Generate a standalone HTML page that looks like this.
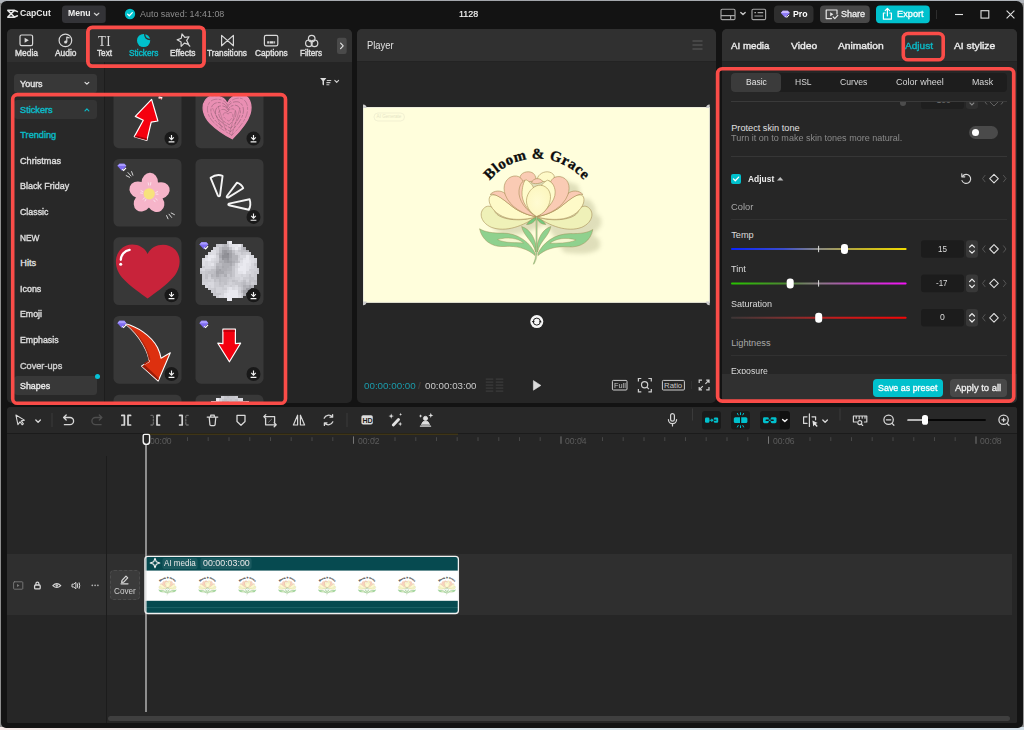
<!DOCTYPE html>
<html lang="en"><head><meta charset="utf-8"><title>CapCut</title>
<style>
*{box-sizing:border-box;margin:0;padding:0}
html,body{width:1024px;height:730px;overflow:hidden}
body{font-family:"Liberation Sans",sans-serif;background:#8e8e8e;position:relative}
.a{position:absolute}
.t{position:absolute;white-space:nowrap;line-height:1;transform-origin:0 0;display:block}
svg{position:absolute;overflow:visible}
#win{left:1.100px;top:1.200px;width:1021.500px;height:726.600px;background:#131313;border-radius:5.500px 6.500px 5px 5px}
.panel{background:#262626;border-radius:5px;overflow:hidden}
.hdr{background:#303030;left:0;top:0;right:0}
.red{border:3.800px solid #fa4c48;border-radius:6.500px;pointer-events:none}
.ic{stroke:#d8d8d8;fill:none;stroke-width:1.2;stroke-linecap:round;stroke-linejoin:round}
.tile{background:#383838;border-radius:5px;width:68px;height:68px;overflow:hidden}
.dl{width:14px;height:14px;border-radius:7px;background:#191919}
.sep{height:1px;background:#363636}
</style></head><body>
<div class="a" style="left:0;top:0;width:1024px;height:3px;background:linear-gradient(90deg,#b2b6bc,#a2a5aa 50%,#b0b4ba)"></div>
<div class="a" style="left:0;top:726.500px;width:1024px;height:3.500px;background:linear-gradient(90deg,#f4e8e6,#e6e4e6 25%,#d8e4ea 50%,#d4e0e8 100%)"></div>
<div class="a" style="left:1020px;top:3px;width:4px;height:723.500px;background:linear-gradient(90deg,#8a8a8a 60%,#a2a2a2)"></div>
<div id="win" class="a"></div>
<!-- ===== TITLE BAR ===== -->
<svg class="a" style="left:0;top:0" width="1024" height="30" viewBox="0 0 1024 30">
 <!-- capcut logo -->
 <g stroke="#e6e6e6" stroke-width="1.5" fill="none" stroke-linejoin="round" stroke-linecap="round">
  <path d="M7.8 10.2H14.2L17.4 11.6M7.8 17.2H14.2L17.4 15.8M7.8 10.4L14.4 17M7.8 17L14.4 10.4"/>
 </g>
 <!-- menu btn -->
 <rect x="62" y="5.500" width="43.800" height="17.400" rx="3.500" fill="#333337"/>
 <path d="M94.400 13.300l2.200 2.100 2.200-2.100" stroke="#cfcfcf" stroke-width="1.250" fill="none" stroke-linecap="round" stroke-linejoin="round"/>
 <!-- autosave check -->
 <circle cx="130" cy="14" r="5.2" fill="#00c1cd"/>
 <path d="M127.6 14.1l1.7 1.7 3-3.2" stroke="#fff" stroke-width="1.3" fill="none" stroke-linecap="round" stroke-linejoin="round"/>
 <!-- layout icon -->
 <g stroke="#a4a4a4" stroke-width="1.150" fill="none">
  <rect x="721" y="9.2" width="14" height="10.4" rx="1.2"/>
  <path d="M721 15.6H735M730.6 15.6V19.6"/>
  <path d="M740.800 12.400l2.200 2.200 2.200-2.200" stroke="#c4c4c4" stroke-width="1.400" stroke-linecap="round" stroke-linejoin="round"/>
  <rect x="752" y="9.2" width="13.6" height="10.4" rx="1.2"/>
  <path d="M754.4 12.6h1.6M757.6 12.6h5.6M754.4 16h8.8"/>
 </g>
 <!-- pro -->
 <rect x="774" y="5.6" width="39.5" height="17.4" rx="4" fill="#2e2e2e"/>
 <g transform="translate(-.8 .9)"><path d="M781.6 12l2-2.2h5l2 2.2-4.5 4.8z" fill="#8f7cf8"/>
 <path d="M781.6 12l2-2.2h5l2 2.2z" fill="#c9b8ff"/>
 <path d="M786.3 15.2l1.300 1.300 2.400-2.600" stroke="#fff" stroke-width="1" fill="none"/></g>
 <!-- share -->
 <rect x="820" y="5.6" width="49.8" height="17.4" rx="4" fill="#484848"/>
 <g stroke="#e8e8e8" stroke-width="1.2" fill="none" stroke-linejoin="round" stroke-linecap="round">
  <path d="M831.5 18.6H826.2V10H837V14"/>
  <path d="M833.2 17l1.6 1.6 3-3.2"/>
 </g>
 <path d="M830.2 12.2v4l3.2-2z" fill="#e8e8e8"/>
 <!-- export -->
 <rect x="876" y="5.6" width="53.8" height="17.6" rx="4" fill="#00c1cd"/>
 <g stroke="#fff" stroke-width="1.2" fill="none" stroke-linejoin="round" stroke-linecap="round">
  <path d="M885 13H883.4V19.2H891.4V13H889.8"/>
  <path d="M887.4 16V8.6M885.2 10.6l2.2-2.2 2.2 2.2"/>
 </g>
 <path d="M936.500 10V19" stroke="#2e2e2e" stroke-width="1"/>
 <!-- window controls -->
 <g stroke="#e0e0e0" stroke-width="1.1" fill="none">
  <path d="M955 14.5H963"/>
  <rect x="981" y="10.7" width="7.8" height="7.4"/>
  <path d="M1006.6 10.6l7.8 7.8M1014.4 10.6l-7.8 7.8"/>
 </g>
</svg>
<span class="t" style="left:20.30px;top:8.04px;font-size:9.4px;color:#e8e8e8;font-weight:700;transform:scaleX(0.924);">CapCut</span>
<span class="t" style="left:68.20px;top:8.47px;font-size:9.6px;color:#f0f0f0;font-weight:700;transform:scaleX(0.905);">Menu</span>
<span class="t" style="left:139.80px;top:9.07px;font-size:9.6px;color:#8e8e8e;transform:scaleX(0.930);">Auto saved: 14:41:08</span>
<span class="t" style="left:459.20px;top:9.27px;font-size:9.6px;color:#f2f2f2;-webkit-text-stroke:0.2px;transform:scaleX(0.931);">1128</span>
<span class="t" style="left:792.80px;top:9.17px;font-size:9.6px;color:#fff;font-weight:700;transform:scaleX(0.911);">Pro</span>
<span class="t" style="left:841.00px;top:8.97px;font-size:9.6px;color:#f0f0f0;-webkit-text-stroke:0.3px;transform:scaleX(0.942);">Share</span>
<span class="t" style="left:897.20px;top:8.97px;font-size:9.6px;color:#fff;-webkit-text-stroke:0.3px;transform:scaleX(0.962);">Export</span>
<!-- ===== LEFT PANEL ===== -->
<div class="a panel" style="left:7px;top:29px;width:344.7px;height:374px;background:#252525">
 <div class="a hdr" style="height:33px"></div>
 <div class="a" style="left:0;top:33px;width:96.5px;bottom:0;background:#282828"></div>
 <div class="a" style="left:96.5px;top:33px;width:1px;bottom:0;background:#1d1d1d"></div>
 <!-- yours / stickers / shapes boxes -->
 <div class="a" style="left:6.5px;top:45.4px;width:83.5px;height:18.2px;border-radius:3.5px;background:#383838"></div>
 <div class="a" style="left:6.5px;top:71px;width:83.5px;height:18.8px;border-radius:3.5px;background:#343434"></div>
 <div class="a" style="left:6.5px;top:347.2px;width:83.5px;height:19px;border-radius:3.5px;background:#383838"></div>
 <div class="a" style="left:87.5px;top:345px;width:5px;height:5px;border-radius:3px;background:#06c2d6"></div>
</div>
<!-- tab icons -->
<svg class="a" style="left:0;top:0" width="360" height="100" viewBox="0 0 360 100">
 <g class="ic">
  <rect x="20" y="35" width="12.6" height="10.6" rx="1.6"/>
  <circle cx="65.4" cy="40.4" r="6.3"/>
  <path d="M66.8 41.8V37.2l2.4.7"/>
  <path d="M221.6 35.4V45.8L233.4 35.4V45.8Z"/>
  <rect x="264.4" y="35.3" width="13.4" height="10.6" rx="1.6"/>
  <path d="M267.200 42.400h7.900" stroke-width="2.300" stroke-linecap="butt"/><path d="M269.400 41v3M273.800 41v3" stroke="#303030" stroke-width=".6"/>
  <circle cx="311.700" cy="38.600" r="3.300"/><circle cx="308.900" cy="43.300" r="3.300"/><circle cx="314.500" cy="43.300" r="3.300"/>
  <path transform="rotate(-14 183.500 40.500)" d="M183.600 33.800l1.900 4 4.300.4-3.200 3 .9 4.300-3.800-2.200-3.900 2.300 1-4.300-3.300-3 4.400-.5z"/>
  <path d="M188.4 44.6l1.4 1.6"/>
 </g>
 <path d="M24.6 37.8v5l4.2-2.5z" fill="#d8d8d8"/>
 <circle cx="65.6" cy="42" r="1.5" fill="#d8d8d8"/>
 <!-- stickers icon (active) -->
 <circle cx="143.6" cy="40.5" r="6.6" fill="#00c1cd"/>
 <path d="M144.700 33.600c-.3 3.600 1.900 6 5.700 5.900" stroke="#303030" stroke-width="1.300" fill="none"/>
 
 <!-- > button -->
 <rect x="337" y="37.8" width="9.7" height="16.2" rx="2.2" fill="#4a4a4a"/>
 <path d="M340.6 43.2l2.6 2.700-2.600 2.700" stroke="#e0e0e0" stroke-width="1.200" fill="none" stroke-linecap="round" stroke-linejoin="round"/>
 <!-- filter icon -->
 <path d="M320.100 77.900h6.300l-2.400 3v4.500l-1.500-.8v-3.700z" fill="#dcdcdc"/>
 <path d="M326.800 80.500h4.400M326.400 82.600h4M326.400 84.700h2.900" stroke="#c8c8c8" stroke-width="1.100"/>
 <path d="M334.800 80.400l1.900 1.900 1.900-1.900" stroke="#d0d0d0" stroke-width="1.100" fill="none" stroke-linecap="round" stroke-linejoin="round"/>
 <!-- sidebar chevrons -->
 <path d="M85 82.300l1.900 1.900 1.900-1.900" stroke="#e0e0e0" stroke-width="1.200" fill="none" stroke-linecap="round" stroke-linejoin="round"/>
 <path d="M85 110.800l1.900-1.900 1.900 1.900" stroke="#0bb9c6" stroke-width="1.200" fill="none" stroke-linecap="round" stroke-linejoin="round"/>
</svg>
<span class="t" style="left:98.200px;top:33.200px;font-family:'Liberation Serif',serif;font-size:15.500px;color:#dcdcdc;letter-spacing:.3px;transform:scaleX(.84)">TI</span>
<span class="t" style="left:15.00px;top:49.37px;font-size:8.9px;color:#dedede;-webkit-text-stroke:0.45px;transform:scaleX(0.949);">Media</span>
<span class="t" style="left:54.50px;top:49.37px;font-size:8.9px;color:#dedede;-webkit-text-stroke:0.45px;transform:scaleX(0.945);">Audio</span>
<span class="t" style="left:97.00px;top:49.37px;font-size:8.9px;color:#dedede;-webkit-text-stroke:0.45px;transform:scaleX(0.922);">Text</span>
<span class="t" style="left:128.80px;top:49.37px;font-size:8.9px;color:#0bb9c6;-webkit-text-stroke:0.45px;transform:scaleX(0.934);">Stickers</span>
<span class="t" style="left:170.00px;top:49.37px;font-size:8.9px;color:#dedede;-webkit-text-stroke:0.45px;transform:scaleX(0.944);">Effects</span>
<span class="t" style="left:207.00px;top:49.37px;font-size:8.9px;color:#dedede;-webkit-text-stroke:0.45px;transform:scaleX(0.928);">Transitions</span>
<span class="t" style="left:254.80px;top:49.37px;font-size:8.9px;color:#dedede;-webkit-text-stroke:0.45px;transform:scaleX(0.933);">Captions</span>
<span class="t" style="left:300.00px;top:49.37px;font-size:8.9px;color:#dedede;-webkit-text-stroke:0.45px;transform:scaleX(0.910);">Filters</span>
<span class="t" style="left:20.00px;top:79.91px;font-size:9.2px;color:#e2e2e2;-webkit-text-stroke:0.4px;transform:scaleX(0.976);">Yours</span>
<span class="t" style="left:20.00px;top:105.51px;font-size:9.2px;color:#0bb9c6;-webkit-text-stroke:0.42px;">Stickers</span>
<span class="t" style="left:20.30px;top:131.01px;font-size:9.2px;color:#0bb9c6;-webkit-text-stroke:0.4px;">Trending</span>
<span class="t" style="left:20.30px;top:156.71px;font-size:9.2px;color:#dedede;-webkit-text-stroke:0.4px;transform:scaleX(0.992);">Christmas</span>
<span class="t" style="left:20.30px;top:182.31px;font-size:9.2px;color:#dedede;-webkit-text-stroke:0.4px;transform:scaleX(0.972);">Black Friday</span>
<span class="t" style="left:20.30px;top:207.91px;font-size:9.2px;color:#dedede;-webkit-text-stroke:0.4px;transform:scaleX(0.960);">Classic</span>
<span class="t" style="left:20.30px;top:233.51px;font-size:9.2px;color:#dedede;-webkit-text-stroke:0.4px;transform:scaleX(0.905);">NEW</span>
<span class="t" style="left:20.30px;top:259.11px;font-size:9.2px;color:#dedede;-webkit-text-stroke:0.4px;">Hits</span>
<span class="t" style="left:20.30px;top:284.71px;font-size:9.2px;color:#dedede;-webkit-text-stroke:0.4px;transform:scaleX(0.970);">Icons</span>
<span class="t" style="left:20.30px;top:310.41px;font-size:9.2px;color:#dedede;-webkit-text-stroke:0.4px;transform:scaleX(0.955);">Emoji</span>
<span class="t" style="left:20.30px;top:336.01px;font-size:9.2px;color:#dedede;-webkit-text-stroke:0.4px;transform:scaleX(0.955);">Emphasis</span>
<span class="t" style="left:20.30px;top:361.51px;font-size:9.2px;color:#cfcfcf;-webkit-text-stroke:0.4px;transform:scaleX(0.996);">Cover-ups</span>
<span class="t" style="left:20.30px;top:381.81px;font-size:9.2px;color:#e8e8e8;-webkit-text-stroke:0.4px;transform:scaleX(0.966);">Shapes</span>
<!-- ===== STICKER TILES ===== -->
<svg class="a" style="left:104px;top:94px;overflow:hidden" width="248" height="309" viewBox="104 94 248 309">
<defs><clipPath id="mc"><circle cx="229.4" cy="271.3" r="28.6"/></clipPath><clipPath id="mc2"><circle cx="229.4" cy="425.400" r="29.600"/></clipPath>
<g id="dl"><circle r="7" fill="#191919"/><path d="M0-3.400V.9M-2.300-1.100L0 1.200 2.300-1.100M-2.900 3.300H2.900" stroke="#f2f2f2" stroke-width="1.150" fill="none"/></g>
<g id="gem" transform="scale(1.25)"><path d="M-3.600-.8l1.600-1.900h4l1.600 1.900-3.600 3.800z" fill="#7f6cf2"/><path d="M-3.600-.8l1.600-1.900h4l1.600 1.900z" fill="#a99cff"/><path d="M.3 1.700l1.100 1 1.900-2.100" stroke="#fff" stroke-width=".9" fill="none"/></g></defs>
<rect x="113.5" y="80.5" width="68" height="67.700" rx="5.500" fill="#383838"/>
<rect x="195.5" y="80.5" width="68" height="67.700" rx="5.500" fill="#383838"/>
<rect x="113.5" y="158.9" width="68" height="67.700" rx="5.500" fill="#383838"/>
<rect x="195.5" y="158.9" width="68" height="67.700" rx="5.500" fill="#383838"/>
<rect x="113.5" y="237.3" width="68" height="67.700" rx="5.500" fill="#383838"/>
<rect x="195.5" y="237.3" width="68" height="67.700" rx="5.500" fill="#383838"/>
<rect x="113.5" y="316.0" width="68" height="67.700" rx="5.500" fill="#383838"/>
<rect x="195.5" y="316.0" width="68" height="67.700" rx="5.500" fill="#383838"/>
<rect x="113.5" y="394.8" width="68" height="67.700" rx="5.500" fill="#383838"/>
<rect x="195.5" y="394.8" width="68" height="67.700" rx="5.500" fill="#383838"/>
<path d="M151.600 99.400L157.900 121 151.200 122.200 146.900 140.400 134.300 136.600 143.300 120.200 135.300 116.400Z" fill="#f5000f" stroke="#fff" stroke-width="1.200" stroke-linejoin="round"/>
<path d="M134.600 136.900L146.700 140.200 147.100 138.600 135.300 135.400Z" fill="#a0000a"/>
<path d="M158.600 97.200l3.600 1.200" stroke="#fff" stroke-width="2.200"/><path d="M159.300 98l2.300.8" stroke="#f33" stroke-width=".8"/>
<path d="M227.300 103.500C224 95.500 211 93 205.500 100 200.500 107 204 117 210 123 217 130 226 135.500 232.300 138.800 238 133 247 124 250 114 253 104 249 95.500 242 94.800 235 94.200 229.500 98 227.300 103.500Z" fill="#e98fb3" stroke="#e98fb3" stroke-width="1.200" stroke-linejoin="round"/>
<path d="M227.300 103.500C224 95.500 211 93 205.500 100 200.500 107 204 117 210 123 217 130 226 135.500 232.300 138.800 238 133 247 124 250 114 253 104 249 95.500 242 94.800 235 94.200 229.500 98 227.300 103.500Z" transform="translate(228.3 115.2) scale(0.84) translate(-228 -115)" fill="none" stroke="#4a3a42" stroke-opacity="0.33" stroke-width="0.95" stroke-dasharray="8.3 1.8 3.6 1.2"/>
<path d="M227.300 103.500C224 95.500 211 93 205.500 100 200.500 107 204 117 210 123 217 130 226 135.500 232.300 138.800 238 133 247 124 250 114 253 104 249 95.500 242 94.800 235 94.200 229.500 98 227.300 103.500Z" transform="translate(227.8 115.5) scale(0.68) translate(-228 -115)" fill="none" stroke="#4a3a42" stroke-opacity="0.4" stroke-width="1.18" stroke-dasharray="10.3 2.2 4.4 1.5"/>
<path d="M227.300 103.500C224 95.500 211 93 205.500 100 200.500 107 204 117 210 123 217 130 226 135.500 232.300 138.800 238 133 247 124 250 114 253 104 249 95.500 242 94.800 235 94.200 229.500 98 227.300 103.500Z" transform="translate(228.4 115.8) scale(0.52) translate(-228 -115)" fill="none" stroke="#4a3a42" stroke-opacity="0.42" stroke-width="1.54" stroke-dasharray="13.5 2.9 5.8 1.9"/>
<path d="M227.300 103.500C224 95.500 211 93 205.500 100 200.500 107 204 117 210 123 217 130 226 135.500 232.300 138.800 238 133 247 124 250 114 253 104 249 95.500 242 94.800 235 94.200 229.500 98 227.300 103.500Z" transform="translate(227.7 116.2) scale(0.36) translate(-228 -115)" fill="none" stroke="#4a3a42" stroke-opacity="0.38" stroke-width="2.22" stroke-dasharray="19.4 4.2 8.3 2.8"/>
<path d="M227.300 103.500C224 95.500 211 93 205.500 100 200.500 107 204 117 210 123 217 130 226 135.500 232.300 138.800 238 133 247 124 250 114 253 104 249 95.500 242 94.800 235 94.200 229.500 98 227.300 103.500Z" transform="translate(228.2 116.5) scale(0.2) translate(-228 -115)" fill="none" stroke="#4a3a42" stroke-opacity="0.3" stroke-width="4.00" stroke-dasharray="35.0 7.5 15.0 5.0"/>
<path d="M231.600 136L240 108M229.500 134L235.500 110M226 131L218 106M222 128L212.500 108" stroke="#4a3a42" stroke-opacity=".28" stroke-width=".8" fill="none"/>
<ellipse cx="149.8" cy="182.4" rx="8.200" ry="9.600" transform="rotate(2 149.8 182.4)" fill="#f6b4c9"/>
<ellipse cx="160.2" cy="190.5" rx="8.200" ry="9.600" transform="rotate(74 160.2 190.5)" fill="#f6b4c9"/>
<ellipse cx="155.7" cy="202.9" rx="8.200" ry="9.600" transform="rotate(146 155.7 202.9)" fill="#f6b4c9"/>
<ellipse cx="142.5" cy="202.4" rx="8.200" ry="9.600" transform="rotate(218 142.5 202.4)" fill="#f6b4c9"/>
<ellipse cx="138.9" cy="189.8" rx="8.200" ry="9.600" transform="rotate(290 138.9 189.8)" fill="#f6b4c9"/>
<circle cx="149.4" cy="193.6" r="8" fill="#f6b4c9"/><circle cx="149.20000000000002" cy="193.79999999999998" r="5.600" fill="#f7e27c"/>
<path d="M126.200 175.600l3.400 1.700M128 172.600l3 3.400M131.600 171.600l1.300 3.600M166.600 215.600l1.400 3.200M169 214.200l2.600 3.200M171.200 213l3.200 1.600" stroke="#e8e8e8" stroke-width=".9" stroke-linecap="round"/>
<path d="M148.200 182.800l.5 2.300M150.800 182.600l-.3 2.400M141 190.600l1.900 1M140.600 193l2 .2M157.600 191.600l-1.900.9M158 194.200l-2-.1M143.200 199.200l1.500-1.500M145 201l1-1.800M153.800 200.200l1.300 1.600M155.800 198.600l1.500 1.300" stroke="#fff" stroke-width=".7" stroke-linecap="round" opacity=".85"/>
<g fill="none" stroke="#f4f4f4" stroke-width="1.900" stroke-linejoin="round"><path d="M210.600 177.800Q216.500 173.600 222.600 175.800L220 195.600Q219 197 217.900 195.600Z"/><path d="M237 182.600Q241.500 184 243.200 188.200L228 197.600Q226.400 197.800 226.800 196.200Z"/><path d="M249.600 199.200Q251.400 204.800 248.800 209.800L229 205.200Q227.600 204.400 229 203.600Z"/></g>
<path d="M147.600 254C143 243.500 128 241.500 120.500 249.500 113 258 115.500 270 122 277.500 130 286.500 142 294 147.600 298.600 153.500 294 166 286 173.500 277 180 269.500 182.500 257.500 175 249.500 167.500 242 152.500 243.500 147.600 254Z" fill="#c8233a"/>
<path d="M120.800 259.800C121 254.800 124.600 250.600 129.600 249.800" stroke="#fff" stroke-width="2.300" fill="none" stroke-linecap="round"/><circle cx="120.700" cy="264.200" r="1.500" fill="#fff"/>
<g shape-rendering="crispEdges"><path fill="#8a8a90" d="M226.8 252.2h3.0v3.0h-3.0z"/><path fill="#909096" d="M221.3 254.9h3.0v3.0h-3.0zM224.0 252.2h3.0v3.0h-3.0zM224.0 254.9h3.0v3.0h-3.0zM226.8 254.9h3.0v3.0h-3.0z"/><path fill="#96969c" d="M221.3 257.6h3.0v3.0h-3.0zM224.0 249.5h3.0v3.0h-3.0zM226.8 257.6h3.0v3.0h-3.0z"/><path fill="#9c9ca2" d="M221.3 249.5h3.0v3.0h-3.0zM221.3 252.2h3.0v3.0h-3.0zM224.0 257.6h3.0v3.0h-3.0zM226.8 260.3h3.0v3.0h-3.0zM245.6 287.3h3.0v3.0h-3.0zM248.3 287.3h3.0v3.0h-3.0z"/><path fill="#a2a2a8" d="M215.9 271.1h3.0v3.0h-3.0zM218.6 268.4h3.0v3.0h-3.0zM224.0 260.3h3.0v3.0h-3.0zM226.8 249.5h3.0v3.0h-3.0zM229.4 252.2h3.0v3.0h-3.0zM229.4 254.9h3.0v3.0h-3.0zM229.4 260.3h3.0v3.0h-3.0zM242.9 290.0h3.0v3.0h-3.0zM245.6 290.0h3.0v3.0h-3.0z"/><path fill="#a8a8ae" d="M215.9 268.4h3.0v3.0h-3.0zM215.9 273.8h3.0v3.0h-3.0zM218.6 254.9h3.0v3.0h-3.0zM218.6 271.1h3.0v3.0h-3.0zM221.3 265.8h3.0v3.0h-3.0zM221.3 271.1h3.0v3.0h-3.0zM229.4 249.5h3.0v3.0h-3.0zM229.4 257.6h3.0v3.0h-3.0zM229.4 263.0h3.0v3.0h-3.0zM242.9 292.8h3.0v3.0h-3.0zM248.3 284.6h3.0v3.0h-3.0z"/><path fill="#aeaeb4" d="M215.9 265.8h3.0v3.0h-3.0zM218.6 252.2h3.0v3.0h-3.0zM218.6 260.3h3.0v3.0h-3.0zM221.3 246.8h3.0v3.0h-3.0zM221.3 260.3h3.0v3.0h-3.0zM221.3 263.0h3.0v3.0h-3.0zM221.3 268.4h3.0v3.0h-3.0zM224.0 246.8h3.0v3.0h-3.0zM224.0 263.0h3.0v3.0h-3.0zM224.0 265.8h3.0v3.0h-3.0zM224.0 268.4h3.0v3.0h-3.0zM224.0 273.8h3.0v3.0h-3.0zM226.8 246.8h3.0v3.0h-3.0zM226.8 263.0h3.0v3.0h-3.0zM226.8 265.8h3.0v3.0h-3.0zM232.1 260.3h3.0v3.0h-3.0zM242.9 246.8h3.0v3.0h-3.0zM242.9 284.6h3.0v3.0h-3.0zM245.6 249.5h3.0v3.0h-3.0z"/><path fill="#b4b4ba" d="M210.5 273.8h3.0v3.0h-3.0zM218.6 257.6h3.0v3.0h-3.0zM218.6 265.8h3.0v3.0h-3.0zM218.6 273.8h3.0v3.0h-3.0zM224.0 244.1h3.0v3.0h-3.0zM224.0 271.1h3.0v3.0h-3.0zM226.8 268.4h3.0v3.0h-3.0zM229.4 265.8h3.0v3.0h-3.0zM229.4 268.4h3.0v3.0h-3.0zM232.1 252.2h3.0v3.0h-3.0zM232.1 254.9h3.0v3.0h-3.0zM232.1 257.6h3.0v3.0h-3.0zM234.8 254.9h3.0v3.0h-3.0zM234.8 257.6h3.0v3.0h-3.0zM242.9 287.3h3.0v3.0h-3.0zM245.6 284.6h3.0v3.0h-3.0zM251.0 284.6h3.0v3.0h-3.0z"/><path fill="#babac0" d="M213.2 271.1h3.0v3.0h-3.0zM213.2 273.8h3.0v3.0h-3.0zM215.9 263.0h3.0v3.0h-3.0zM215.9 276.5h3.0v3.0h-3.0zM218.6 249.5h3.0v3.0h-3.0zM218.6 263.0h3.0v3.0h-3.0zM218.6 276.5h3.0v3.0h-3.0zM218.6 279.2h3.0v3.0h-3.0zM221.3 273.8h3.0v3.0h-3.0zM226.8 271.1h3.0v3.0h-3.0zM229.4 271.1h3.0v3.0h-3.0zM229.4 273.8h3.0v3.0h-3.0zM232.1 263.0h3.0v3.0h-3.0zM234.8 260.3h3.0v3.0h-3.0zM240.2 290.0h3.0v3.0h-3.0zM242.9 281.9h3.0v3.0h-3.0z"/><path fill="#c0c0c6" d="M205.1 273.8h3.0v3.0h-3.0zM205.1 276.5h3.0v3.0h-3.0zM207.8 271.1h3.0v3.0h-3.0zM210.5 268.4h3.0v3.0h-3.0zM210.5 271.1h3.0v3.0h-3.0zM210.5 276.5h3.0v3.0h-3.0zM213.2 268.4h3.0v3.0h-3.0zM213.2 276.5h3.0v3.0h-3.0zM213.2 279.2h3.0v3.0h-3.0zM218.6 246.8h3.0v3.0h-3.0zM218.6 281.9h3.0v3.0h-3.0zM221.3 244.1h3.0v3.0h-3.0zM221.3 276.5h3.0v3.0h-3.0zM221.3 279.2h3.0v3.0h-3.0zM224.0 276.5h3.0v3.0h-3.0zM224.0 279.2h3.0v3.0h-3.0zM224.0 281.9h3.0v3.0h-3.0zM226.8 276.5h3.0v3.0h-3.0zM232.1 249.5h3.0v3.0h-3.0zM232.1 279.2h3.0v3.0h-3.0zM240.2 246.8h3.0v3.0h-3.0zM240.2 249.5h3.0v3.0h-3.0zM240.2 281.9h3.0v3.0h-3.0zM240.2 284.6h3.0v3.0h-3.0zM242.9 249.5h3.0v3.0h-3.0zM242.9 279.2h3.0v3.0h-3.0zM248.3 279.2h3.0v3.0h-3.0zM248.3 281.9h3.0v3.0h-3.0zM253.8 279.2h3.0v3.0h-3.0z"/><path fill="#c6c6cc" d="M199.7 271.1h3.0v3.0h-3.0zM205.1 271.1h3.0v3.0h-3.0zM213.2 287.3h3.0v3.0h-3.0zM213.2 290.0h3.0v3.0h-3.0zM213.2 292.8h3.0v3.0h-3.0zM215.9 244.1h3.0v3.0h-3.0zM215.9 252.2h3.0v3.0h-3.0zM215.9 279.2h3.0v3.0h-3.0zM215.9 292.8h3.0v3.0h-3.0zM218.6 284.6h3.0v3.0h-3.0zM218.6 292.8h3.0v3.0h-3.0zM221.3 281.9h3.0v3.0h-3.0zM221.3 284.6h3.0v3.0h-3.0zM226.8 244.1h3.0v3.0h-3.0zM226.8 273.8h3.0v3.0h-3.0zM226.8 279.2h3.0v3.0h-3.0zM229.4 246.8h3.0v3.0h-3.0zM229.4 276.5h3.0v3.0h-3.0zM232.1 265.8h3.0v3.0h-3.0zM232.1 268.4h3.0v3.0h-3.0zM232.1 271.1h3.0v3.0h-3.0zM232.1 273.8h3.0v3.0h-3.0zM234.8 279.2h3.0v3.0h-3.0zM234.8 281.9h3.0v3.0h-3.0zM237.5 249.5h3.0v3.0h-3.0zM237.5 260.3h3.0v3.0h-3.0zM237.5 281.9h3.0v3.0h-3.0zM237.5 284.6h3.0v3.0h-3.0zM240.2 244.1h3.0v3.0h-3.0zM240.2 252.2h3.0v3.0h-3.0zM240.2 287.3h3.0v3.0h-3.0zM245.6 281.9h3.0v3.0h-3.0zM248.3 273.8h3.0v3.0h-3.0zM248.3 276.5h3.0v3.0h-3.0zM251.0 276.5h3.0v3.0h-3.0zM251.0 279.2h3.0v3.0h-3.0zM253.8 263.0h3.0v3.0h-3.0zM253.8 281.9h3.0v3.0h-3.0zM256.4 268.4h3.0v3.0h-3.0z"/><path fill="#ccccd2" d="M202.4 265.8h3.0v3.0h-3.0zM202.4 271.1h3.0v3.0h-3.0zM202.4 273.8h3.0v3.0h-3.0zM202.4 276.5h3.0v3.0h-3.0zM202.4 279.2h3.0v3.0h-3.0zM205.1 268.4h3.0v3.0h-3.0zM205.1 279.2h3.0v3.0h-3.0zM207.8 268.4h3.0v3.0h-3.0zM207.8 273.8h3.0v3.0h-3.0zM207.8 279.2h3.0v3.0h-3.0zM207.8 287.3h3.0v3.0h-3.0zM210.5 287.3h3.0v3.0h-3.0zM210.5 290.0h3.0v3.0h-3.0zM213.2 265.8h3.0v3.0h-3.0zM213.2 281.9h3.0v3.0h-3.0zM213.2 284.6h3.0v3.0h-3.0zM215.9 260.3h3.0v3.0h-3.0zM215.9 281.9h3.0v3.0h-3.0zM215.9 284.6h3.0v3.0h-3.0zM215.9 295.4h3.0v3.0h-3.0zM218.6 244.1h3.0v3.0h-3.0zM221.3 287.3h3.0v3.0h-3.0zM224.0 287.3h3.0v3.0h-3.0zM226.8 281.9h3.0v3.0h-3.0zM229.4 279.2h3.0v3.0h-3.0zM229.4 284.6h3.0v3.0h-3.0zM232.1 276.5h3.0v3.0h-3.0zM232.1 281.9h3.0v3.0h-3.0zM234.8 252.2h3.0v3.0h-3.0zM237.5 254.9h3.0v3.0h-3.0zM240.2 279.2h3.0v3.0h-3.0zM240.2 292.8h3.0v3.0h-3.0zM240.2 295.4h3.0v3.0h-3.0zM242.9 252.2h3.0v3.0h-3.0zM242.9 276.5h3.0v3.0h-3.0zM245.6 276.5h3.0v3.0h-3.0zM248.3 252.2h3.0v3.0h-3.0zM251.0 281.9h3.0v3.0h-3.0zM253.8 271.1h3.0v3.0h-3.0zM253.8 273.8h3.0v3.0h-3.0zM253.8 276.5h3.0v3.0h-3.0zM256.4 271.1h3.0v3.0h-3.0z"/><path fill="#d2d2d8" d="M199.7 268.4h3.0v3.0h-3.0zM202.4 281.9h3.0v3.0h-3.0zM205.1 281.9h3.0v3.0h-3.0zM207.8 276.5h3.0v3.0h-3.0zM207.8 284.6h3.0v3.0h-3.0zM210.5 265.8h3.0v3.0h-3.0zM210.5 279.2h3.0v3.0h-3.0zM213.2 246.8h3.0v3.0h-3.0zM213.2 260.3h3.0v3.0h-3.0zM213.2 263.0h3.0v3.0h-3.0zM215.9 246.8h3.0v3.0h-3.0zM215.9 249.5h3.0v3.0h-3.0zM215.9 254.9h3.0v3.0h-3.0zM215.9 257.6h3.0v3.0h-3.0zM215.9 287.3h3.0v3.0h-3.0zM215.9 290.0h3.0v3.0h-3.0zM218.6 287.3h3.0v3.0h-3.0zM218.6 290.0h3.0v3.0h-3.0zM221.3 290.0h3.0v3.0h-3.0zM221.3 292.8h3.0v3.0h-3.0zM224.0 284.6h3.0v3.0h-3.0zM226.8 241.4h3.0v3.0h-3.0zM226.8 284.6h3.0v3.0h-3.0zM229.4 281.9h3.0v3.0h-3.0zM232.1 284.6h3.0v3.0h-3.0zM234.8 249.5h3.0v3.0h-3.0zM234.8 263.0h3.0v3.0h-3.0zM234.8 265.8h3.0v3.0h-3.0zM234.8 276.5h3.0v3.0h-3.0zM237.5 252.2h3.0v3.0h-3.0zM237.5 257.6h3.0v3.0h-3.0zM237.5 276.5h3.0v3.0h-3.0zM237.5 279.2h3.0v3.0h-3.0zM237.5 287.3h3.0v3.0h-3.0zM237.5 290.0h3.0v3.0h-3.0zM240.2 257.6h3.0v3.0h-3.0zM240.2 273.8h3.0v3.0h-3.0zM245.6 252.2h3.0v3.0h-3.0zM245.6 273.8h3.0v3.0h-3.0zM245.6 279.2h3.0v3.0h-3.0zM248.3 268.4h3.0v3.0h-3.0zM251.0 268.4h3.0v3.0h-3.0zM251.0 271.1h3.0v3.0h-3.0zM251.0 273.8h3.0v3.0h-3.0zM253.8 265.8h3.0v3.0h-3.0zM253.8 268.4h3.0v3.0h-3.0z"/><path fill="#d8d8de" d="M202.4 257.6h3.0v3.0h-3.0zM202.4 268.4h3.0v3.0h-3.0zM205.1 254.9h3.0v3.0h-3.0zM205.1 260.3h3.0v3.0h-3.0zM205.1 263.0h3.0v3.0h-3.0zM205.1 265.8h3.0v3.0h-3.0zM205.1 284.6h3.0v3.0h-3.0zM207.8 252.2h3.0v3.0h-3.0zM207.8 265.8h3.0v3.0h-3.0zM207.8 281.9h3.0v3.0h-3.0zM210.5 260.3h3.0v3.0h-3.0zM210.5 281.9h3.0v3.0h-3.0zM210.5 284.6h3.0v3.0h-3.0zM213.2 257.6h3.0v3.0h-3.0zM218.6 295.4h3.0v3.0h-3.0zM221.3 295.4h3.0v3.0h-3.0zM224.0 290.0h3.0v3.0h-3.0zM232.1 287.3h3.0v3.0h-3.0zM234.8 268.4h3.0v3.0h-3.0zM234.8 271.1h3.0v3.0h-3.0zM234.8 273.8h3.0v3.0h-3.0zM234.8 284.6h3.0v3.0h-3.0zM237.5 246.8h3.0v3.0h-3.0zM237.5 273.8h3.0v3.0h-3.0zM237.5 292.8h3.0v3.0h-3.0zM240.2 254.9h3.0v3.0h-3.0zM240.2 276.5h3.0v3.0h-3.0zM242.9 254.9h3.0v3.0h-3.0zM242.9 273.8h3.0v3.0h-3.0zM245.6 271.1h3.0v3.0h-3.0zM248.3 271.1h3.0v3.0h-3.0zM251.0 254.9h3.0v3.0h-3.0zM251.0 263.0h3.0v3.0h-3.0zM251.0 265.8h3.0v3.0h-3.0zM253.8 257.6h3.0v3.0h-3.0zM253.8 260.3h3.0v3.0h-3.0z"/><path fill="#dedee4" d="M202.4 260.3h3.0v3.0h-3.0zM202.4 263.0h3.0v3.0h-3.0zM207.8 260.3h3.0v3.0h-3.0zM207.8 263.0h3.0v3.0h-3.0zM210.5 249.5h3.0v3.0h-3.0zM210.5 252.2h3.0v3.0h-3.0zM210.5 257.6h3.0v3.0h-3.0zM213.2 249.5h3.0v3.0h-3.0zM213.2 252.2h3.0v3.0h-3.0zM226.8 287.3h3.0v3.0h-3.0zM229.4 244.1h3.0v3.0h-3.0zM232.1 246.8h3.0v3.0h-3.0zM234.8 287.3h3.0v3.0h-3.0zM237.5 265.8h3.0v3.0h-3.0zM237.5 295.4h3.0v3.0h-3.0zM240.2 260.3h3.0v3.0h-3.0zM248.3 254.9h3.0v3.0h-3.0zM248.3 257.6h3.0v3.0h-3.0zM248.3 265.8h3.0v3.0h-3.0zM251.0 257.6h3.0v3.0h-3.0zM251.0 260.3h3.0v3.0h-3.0z"/><path fill="#e4e4ea" d="M205.1 257.6h3.0v3.0h-3.0zM210.5 263.0h3.0v3.0h-3.0zM213.2 254.9h3.0v3.0h-3.0zM224.0 292.8h3.0v3.0h-3.0zM224.0 295.4h3.0v3.0h-3.0zM226.8 290.0h3.0v3.0h-3.0zM229.4 287.3h3.0v3.0h-3.0zM232.1 244.1h3.0v3.0h-3.0zM234.8 244.1h3.0v3.0h-3.0zM237.5 263.0h3.0v3.0h-3.0zM237.5 271.1h3.0v3.0h-3.0zM240.2 263.0h3.0v3.0h-3.0zM240.2 271.1h3.0v3.0h-3.0zM242.9 257.6h3.0v3.0h-3.0zM245.6 263.0h3.0v3.0h-3.0zM245.6 265.8h3.0v3.0h-3.0zM245.6 268.4h3.0v3.0h-3.0zM248.3 260.3h3.0v3.0h-3.0zM248.3 263.0h3.0v3.0h-3.0z"/><path fill="#eaeaf0" d="M207.8 254.9h3.0v3.0h-3.0zM207.8 257.6h3.0v3.0h-3.0zM210.5 254.9h3.0v3.0h-3.0zM226.8 292.8h3.0v3.0h-3.0zM226.8 295.4h3.0v3.0h-3.0zM226.8 298.1h3.0v3.0h-3.0zM229.4 241.4h3.0v3.0h-3.0zM229.4 290.0h3.0v3.0h-3.0zM229.4 292.8h3.0v3.0h-3.0zM229.4 295.4h3.0v3.0h-3.0zM229.4 298.1h3.0v3.0h-3.0zM232.1 290.0h3.0v3.0h-3.0zM232.1 292.8h3.0v3.0h-3.0zM232.1 295.4h3.0v3.0h-3.0zM234.8 246.8h3.0v3.0h-3.0zM234.8 290.0h3.0v3.0h-3.0zM234.8 292.8h3.0v3.0h-3.0zM234.8 295.4h3.0v3.0h-3.0zM237.5 244.1h3.0v3.0h-3.0zM237.5 268.4h3.0v3.0h-3.0zM240.2 265.8h3.0v3.0h-3.0zM240.2 268.4h3.0v3.0h-3.0zM242.9 260.3h3.0v3.0h-3.0zM242.9 263.0h3.0v3.0h-3.0zM242.9 265.8h3.0v3.0h-3.0zM242.9 268.4h3.0v3.0h-3.0zM242.9 271.1h3.0v3.0h-3.0zM245.6 254.9h3.0v3.0h-3.0zM245.6 257.6h3.0v3.0h-3.0zM245.6 260.3h3.0v3.0h-3.0z"/></g>
<path d="M125.300 323.800C137 326.500 151 335.500 157.500 347.500 159.500 351.500 160.600 355 161 358.200L170.300 352.800 158.200 381 141.600 366 149.200 361.600C148.600 353.500 141.500 337 125.300 323.800Z" fill="#dd300f" stroke="#fff" stroke-width="1.100" stroke-linejoin="round"/>
<path d="M141.900 366.300L158.100 380.500 158.900 378.400 144.600 364.800Z M149.200 361.600L144.600 364.800 143.600 363.400 148.800 360.200Z" fill="#9c1c07"/>
<path d="M126.200 324.600C140 336 147.600 351 148.800 360.400L150.400 359.600C149 350 141 335.500 127.600 324.800Z" fill="#a92008" opacity=".9"/>
<path d="M222.900 329.200H235.400V343.600L240.600 343.200 229.400 361.800 217.800 343.200 222.900 343.600Z" fill="#f5000f" stroke="#fff" stroke-width="1.200" stroke-linejoin="round"/>
<path d="M223.500 329.800H234.800V332H223.500Z" fill="#c4000c"/>
<g shape-rendering="crispEdges"><path fill="#96969c" d="M237.5 403.8h3.0v3.0h-3.0z"/><path fill="#9c9ca2" d="M240.2 403.8h3.0v3.0h-3.0z"/><path fill="#a2a2a8" d="M224.0 403.8h3.0v3.0h-3.0zM234.8 403.8h3.0v3.0h-3.0zM242.9 403.8h3.0v3.0h-3.0z"/><path fill="#aeaeb4" d="M221.3 401.1h3.0v3.0h-3.0zM221.3 403.8h3.0v3.0h-3.0zM226.7 401.1h3.0v3.0h-3.0zM226.7 403.8h3.0v3.0h-3.0z"/><path fill="#b4b4ba" d="M224.0 401.1h3.0v3.0h-3.0zM232.1 403.8h3.0v3.0h-3.0z"/><path fill="#babac0" d="M229.4 403.8h3.0v3.0h-3.0zM232.1 401.1h3.0v3.0h-3.0zM234.8 401.1h3.0v3.0h-3.0zM237.5 401.1h3.0v3.0h-3.0z"/><path fill="#c0c0c6" d="M218.6 403.8h3.0v3.0h-3.0zM224.0 398.4h3.0v3.0h-3.0zM226.7 395.7h3.0v3.0h-3.0zM229.4 398.4h3.0v3.0h-3.0zM229.4 401.1h3.0v3.0h-3.0zM234.8 398.4h3.0v3.0h-3.0zM245.6 403.8h3.0v3.0h-3.0z"/><path fill="#c6c6cc" d="M221.3 398.4h3.0v3.0h-3.0zM224.0 395.7h3.0v3.0h-3.0zM226.7 398.4h3.0v3.0h-3.0zM229.4 395.7h3.0v3.0h-3.0zM232.1 395.7h3.0v3.0h-3.0zM232.1 398.4h3.0v3.0h-3.0zM240.2 401.1h3.0v3.0h-3.0zM242.9 401.1h3.0v3.0h-3.0z"/><path fill="#ccccd2" d="M218.6 401.1h3.0v3.0h-3.0zM234.8 395.7h3.0v3.0h-3.0z"/><path fill="#d2d2d8" d="M207.8 403.8h3.0v3.0h-3.0zM215.9 403.8h3.0v3.0h-3.0zM218.6 398.4h3.0v3.0h-3.0zM221.3 395.7h3.0v3.0h-3.0zM237.5 398.4h3.0v3.0h-3.0zM248.3 403.8h3.0v3.0h-3.0z"/><path fill="#d8d8de" d="M213.2 403.8h3.0v3.0h-3.0zM240.2 398.4h3.0v3.0h-3.0zM245.6 401.1h3.0v3.0h-3.0z"/><path fill="#dedee4" d="M210.5 401.1h3.0v3.0h-3.0zM210.5 403.8h3.0v3.0h-3.0zM213.2 401.1h3.0v3.0h-3.0zM215.9 401.1h3.0v3.0h-3.0z"/><path fill="#eaeaf0" d="M215.9 398.4h3.0v3.0h-3.0z"/></g>
<use href="#dl" x="171.5" y="138.5"/>
<use href="#dl" x="253.5" y="138.5"/>
<use href="#dl" x="253.5" y="216.9"/>
<use href="#dl" x="171.5" y="295.3"/>
<use href="#dl" x="253.5" y="295.3"/>
<use href="#dl" x="171.5" y="374.0"/>
<use href="#dl" x="253.5" y="374.0"/>
<use href="#gem" x="121.9" y="167.1"/>
<use href="#gem" x="203.9" y="245.5"/>
<use href="#gem" x="121.9" y="324.2"/>
<use href="#gem" x="203.9" y="324.2"/>
</svg>
<!-- ===== PLAYER PANEL ===== -->
<div class="a panel" style="left:357px;top:29px;width:358.900px;height:373.800px">
 <div class="a hdr" style="height:32.500px;border-bottom:1px solid #232323"></div>
</div>
<span class="t" style="left:366.60px;top:41.00px;font-size:10.4px;color:#e2e2e2;transform:scaleX(0.900);">Player</span>
<svg class="a" style="left:357px;top:29px" width="358" height="374" viewBox="357 29 358 374">
 <path d="M692.500 41h10M692.500 45h10M692.500 49h10" stroke="#5c5c5c" stroke-width="1.100"/>
 <!-- canvas -->
 <rect x="363" y="107" width="346.700" height="195.700" fill="#fffedc"/>
 <rect x="363.400" y="107.400" width="345.900" height="194.900" fill="none" stroke="#e9e9dc" stroke-width=".8"/>
 <g fill="#cdcdcd"><path d="M363 104.500a3.600 3.600 0 0 1 3.600 3.600h-3.600zM709.700 104.500a3.600 3.600 0 0 0-3.600 3.600h3.600zM363 305.200a3.600 3.600 0 0 0 3.600-3.600h-3.600zM709.700 305.200a3.600 3.600 0 0 1-3.600-3.600h3.600z"/></g>
 <rect x="374" y="113" width="30.500" height="8" rx="4" fill="none" stroke="#ecebcf" stroke-width=".7"/>
 <!-- rotate handle -->
 <circle cx="536.800" cy="321.600" r="6.500" fill="#f6f6f6"/>
 <circle cx="536.800" cy="321.600" r="3.500" stroke="#222" stroke-width="1" fill="none"/>
 <path d="M531.800 321l3 0-1.500 1.900zM541.800 322.200l-3 0 1.500-1.900z" fill="#1a1a1a"/>
 <!-- level bars -->
 <g stroke="#3b3b3b" stroke-width="1.300"><path d="M485.800 379.200h7.500M485.800 382.200h7.500M485.800 385.200h7.500M485.800 388.200h7.500M485.800 391.200h7.500M495.800 379.200h7.500M495.800 382.200h7.500M495.800 385.200h7.500M495.800 388.200h7.500M495.800 391.200h7.500"/></g>
 <!-- play -->
 <path d="M533.400 380.600v9.600l7.500-4.800z" fill="#dcdcdc" stroke="#dcdcdc" stroke-width=".6" stroke-linejoin="round"/>
 <!-- full / zoom / ratio / fullscreen -->
 <g stroke="#cfcfcf" stroke-width="1" fill="none">
  <rect x="612.400" y="380.400" width="14.600" height="9.600" rx="1"/>
  <rect x="662.400" y="380.400" width="22" height="9.600" rx="1"/>
  <path d="M638.400 381.400v-2.900h2.900M648.400 378.500h2.900v2.900M651.300 389v2.900h-2.900M641.300 391.900h-2.900v-2.900" stroke-width="1.200"/>
  <circle cx="644.600" cy="384.800" r="3.100" stroke-width="1.200"/><path d="M646.900 387.200l2 2" stroke-width="1.200"/>
  <path d="M699.200 383v-2.800h2.800M706.200 380.200h2.800v2.800M709 387v2.800h-2.800M702 389.800h-2.800v-2.800M708.600 380.600l-3.200 3.200M699.600 389.400l3.200-3.200" stroke-width="1.200"/>
 </g>
 <path d="M691.600 381v8" stroke="#333" stroke-width="1"/>
</svg>
<span class="t" style="left:376.600px;top:114.600px;font-size:4.600px;color:#e6e5c6">AI Generate</span>
<span class="t" style="left:363.60px;top:381.17px;font-size:9.6px;color:#1b9bab;transform:scaleX(1.021);">00:00:00:00</span>
<span class="t" style="left:418.00px;top:381.17px;font-size:9.6px;color:#4a4a4a;">/</span>
<span class="t" style="left:425.00px;top:381.17px;font-size:9.6px;color:#c9c9c9;transform:scaleX(1.017);">00:00:03:00</span>
<span class="t" style="left:613.60px;top:381.50px;font-size:7.8px;color:#c6c6c6;transform:scaleX(0.951);">Full</span>
<span class="t" style="left:664.00px;top:381.50px;font-size:7.8px;color:#c6c6c6;">Ratio</span>
<!-- ===== LOGO in canvas (coords = 5.368x zoom of region 468,136) ===== -->
<svg class="a" style="left:468px;top:136px" width="144" height="136" viewBox="0 0 773 730">
 <defs>
  <filter id="blr" x="-20%" y="-20%" width="140%" height="140%"><feGaussianBlur stdDeviation="12"/></filter>
  <radialGradient id="bud" cx=".45" cy=".55" r=".6"><stop offset="0" stop-color="#fffbd2"/><stop offset="1" stop-color="#fcf6be"/></radialGradient>
  <path id="arc" d="M69.400 312.800A331.700 331.700 0 0 1 670.600 312.800"/>
  <g id="flw">
   <g stroke="#a48a50" stroke-width="3.100" stroke-linejoin="round">
    <path d="M368 433C300 480 205 520 125 490 62 462 56 402 96 380 118 370 138 385 142 400 150 430 200 450 272 450 320 448 350 440 368 433Z" fill="#eff1b8"/>
    <path d="M368 433C436 480 531 520 611 490 674 462 680 402 640 380 618 370 598 385 594 400 586 430 536 450 464 450 416 448 386 440 368 433Z" fill="#eff1b8"/>
    <path d="M368 433C330 446 272 452 225 444 170 434 130 400 116 360 108 330 120 316 134 316 165 312 200 352 250 388 300 420 340 428 368 433Z" fill="#fefac8"/>
    <path d="M368 433C406 446 464 452 511 444 566 434 606 400 620 360 628 330 616 316 602 316 571 312 536 352 486 388 436 420 396 428 368 433Z" fill="#fefac8"/>
    <path d="M368 433C300 420 232 360 200 310 180 290 140 290 119 314 150 304 200 350 250 388 300 420 340 428 368 433Z" fill="#facbb4"/>
    <path d="M368 433C436 420 504 360 536 310 556 290 596 290 617 314 586 304 536 350 486 388 436 420 396 428 368 433Z" fill="#facbb4"/>
    <path d="M290 250C262 218 292 190 326 192 354 194 364 212 366 240Z" fill="#facbb4"/>
    <path d="M370 240C372 212 396 192 426 192 460 194 478 222 450 250Z" fill="#fefac8"/>
    <path d="M368 433C300 424 224 380 200 316 182 266 204 222 246 215 286 210 304 244 298 288 292 344 332 402 368 433Z" fill="#facbb4"/>
    <path d="M368 433C436 424 512 380 536 316 554 266 534 224 494 218 452 214 434 246 438 290 444 346 404 402 368 433Z" fill="#facbb4"/>
    <path d="M368 433C312 402 268 344 274 292 278 256 294 241 307 237 296 262 292 302 302 342 314 386 344 420 368 433Z" fill="#facbb4"/>
    <path d="M368 433C424 402 466 346 462 294 458 260 446 244 432 240 444 264 446 304 436 344 424 388 392 420 368 433Z" fill="#facbb4"/>
    <path d="M368 433C320 402 286 352 290 300 293 264 301 241 311 234 334 246 352 268 356 292Z" fill="#fefbcc"/>
    <path d="M368 433C416 402 470 352 468 300 466 264 448 244 426 237 402 250 388 268 384 292Z" fill="#fefbcc"/>
    <path d="M341 250C350 226 384 220 402 244 392 256 352 260 341 250Z" fill="#facbb4"/>
    <path d="M368 432C330 410 306 370 316 330 326 290 360 262 390 264 425 268 448 300 442 340 436 385 405 420 368 432Z" fill="url(#bud)"/>
   </g>
   <g fill="#8fd18e" stroke="#9a8a50" stroke-width="2.400" stroke-linejoin="round">
    <path d="M360 630C334 574 272 521 186 521 134 522 92 516 62 498 74 556 124 600 200 593 262 588 322 606 360 642Z"/>
    <path d="M376 630C402 574 464 524 550 524 602 525 642 520 670 502 660 560 610 602 534 595 472 590 412 608 376 642Z"/>
    <path d="M362 622C352 566 300 540 288 486 332 500 366 548 368 622Z"/>
    <path d="M374 622C384 566 434 540 445 486 402 500 370 548 368 622Z"/>
    <path d="M364 438C348 442 326 456 314 475 338 476 356 462 366 444Z" fill="#74c97e"/>
    <path d="M372 440C388 444 408 458 418 475 396 476 380 462 370 446Z" fill="#74c97e"/>
   </g>
   <path d="M158 556C210 540 268 548 298 574 262 572 200 576 158 556ZM580 558C528 542 470 550 440 576 476 574 538 578 580 558Z" fill="#f4f8d0" stroke="#9a8a50" stroke-width="2"/>
   <path d="M368 438V620C368 650 362 668 353 686" fill="none" stroke="#9fd79a" stroke-width="6" stroke-linecap="round"/>
   <path d="M364.500 440V620C364 650 358 670 351 688M371.500 440V622C372 650 366 668 356 684" fill="none" stroke="#9a8a50" stroke-width="1.800" stroke-linecap="round"/>
  </g>
 </defs>
 <g filter="url(#blr)" opacity=".48" transform="translate(48 36)">
  <path d="M370 435C300 470 200 520 120 482 58 452 58 392 104 376 100 330 138 320 160 296 186 322 182 268 200 224 240 214 268 200 296 190 330 192 400 194 428 194 478 200 500 218 540 226 558 268 554 322 600 300 606 316 640 330 636 382 682 398 680 456 620 486 644 522 670 504 658 566 608 606 534 596 468 588 414 608 378 648L352 692 362 648C326 606 270 584 204 594 130 604 78 560 64 498 92 516 134 522 184 522Z" fill="#bdbd96"/>
 </g>
 <use href="#flw"/>
 <text font-family="'Liberation Serif',serif" font-weight="700" font-size="80" fill="#0c0c0c" letter-spacing="3" stroke="#0c0c0c" stroke-width="1.800"><textPath href="#arc" startOffset="50%" text-anchor="middle">Bloom &amp; Grace</textPath></text>
</svg>
<!-- ===== RIGHT PANEL ===== -->
<div class="a panel" style="left:721.800px;top:29px;width:294.800px;height:374px">
 <div class="a hdr" style="height:32.500px;border-bottom:1px solid #232323"></div>
 <div class="a" style="left:-.8px;top:0;width:296px;height:374px">
 <!-- sub tabs -->
 <div class="a" style="left:10px;top:44px;width:276px;height:19px;border-radius:4px;background:#1d1d1d"></div>
 <div class="a" style="left:10px;top:44px;width:50px;height:19px;border-radius:4px;background:#3b3b3b"></div>
 <div class="a sep" style="left:10px;top:72.200px;width:276px;background:#3a3a3a"></div>
 <div class="a sep" style="left:10px;top:127px;width:276px"></div>
 <div class="a sep" style="left:10px;top:190px;width:276px;background:#313131"></div>
 <div class="a sep" style="left:10px;top:326.400px;width:276px;background:#313131"></div>
 <!-- toggle -->
 <div class="a" style="left:248px;top:97.400px;width:28.600px;height:12.800px;border-radius:7px;background:#4a4a4a"></div>
 <div class="a" style="left:250.800px;top:100.400px;width:7px;height:7px;border-radius:4px;background:#fff"></div>
 <!-- partially scrolled row under first separator -->
 <div class="a" style="left:200px;top:73px;width:43px;height:7.400px;border-radius:0 0 3px 3px;background:#1f1f1f"></div>
 <div class="a" style="left:245px;top:73px;width:12px;height:7.400px;border-radius:0 0 3px 3px;background:#303030"></div>
 <div class="a" style="left:179px;top:73px;width:6px;height:3.500px;border-radius:0 0 3px 3px;background:#4c4c4c"></div>
 <div class="a" style="left:200px;top:73px;width:43px;height:7px;overflow:hidden"><span class="t" style="left:15.500px;top:-5.600px;font-size:8.600px;color:#6e6e6e">100</span></div>
 <!-- checkbox -->
 <div class="a" style="left:10px;top:145px;width:10px;height:9.600px;border-radius:2px;background:#00c1cd"></div>
 </div>
</div>
<svg class="a" style="left:721px;top:29px" width="296" height="374" viewBox="721 29 296 374">
 <defs>
  <linearGradient id="gTemp" x1="0" x2="1"><stop offset="0" stop-color="#0a24ff"/><stop offset=".3" stop-color="#3a4ccc"/><stop offset=".5" stop-color="#8a8a82"/><stop offset=".75" stop-color="#c4b428"/><stop offset="1" stop-color="#f2dc00"/></linearGradient>
  <linearGradient id="gTint" x1="0" x2="1"><stop offset="0" stop-color="#28c400"/><stop offset=".3" stop-color="#4c8a30"/><stop offset=".5" stop-color="#8a7a86"/><stop offset=".75" stop-color="#c43cc8"/><stop offset="1" stop-color="#f412f6"/></linearGradient>
  <linearGradient id="gSat" x1="0" x2="1"><stop offset="0" stop-color="#3c3636"/><stop offset=".3" stop-color="#7a3030"/><stop offset=".6" stop-color="#c41c1c"/><stop offset="1" stop-color="#f40606"/></linearGradient>
  <g id="kf" fill="none" stroke-linecap="round" stroke-linejoin="round"><path d="M-9-3.200l-2.500 3.200 2.500 3.200M9.500-3.200l2.500 3.200-2.500 3.200" stroke="#555" stroke-width="1"/><path d="M0-4.300L4.300 0 0 4.300-4.300 0Z" stroke="#dcdcdc" stroke-width="1.100"/></g>
  <g id="stp"><rect x="-6" y="-8.800" width="12" height="17.600" rx="3" fill="#383838"/><path d="M-2.400-1.800L0-4.200 2.400-1.800M-2.400 1.800L0 4.200 2.400 1.800" stroke="#f0f0f0" stroke-width="1.200" fill="none" stroke-linecap="round" stroke-linejoin="round"/></g>
  <g id="thumb"><rect x="-3.500" y="-5" width="7" height="10" rx="3.200" fill="#fff"/></g>
 </defs>
 <!-- faded kf of scrolled row -->
 <g opacity=".5"><path d="M985 102l2 2.500M1003 102l-2 2.500M990 102l4 4 4-4" stroke="#999" stroke-width="1" fill="none"/><path d="M969.600 102.600l2.300 2.300 2.300-2.300" stroke="#ddd" stroke-width="1.100" fill="none"/></g>
 <!-- checkbox tick, triangle -->
 <path d="M733.400 178.900l1.900 1.900 3.400-3.700" stroke="#fff" stroke-width="1.300" fill="none" stroke-linecap="round" stroke-linejoin="round"/>
 <path d="M777 180.600l3.200-3.600 3.200 3.600z" fill="#bdbdbd"/>
 <!-- reset -->
 <path d="M962.600 176.200a4.500 4.500 0 1 1-.6 4.400" stroke="#d8d8d8" stroke-width="1.150" fill="none" stroke-linecap="round"/>
 <path d="M961.800 173.800v3h3" stroke="#d8d8d8" stroke-width="1.150" fill="none" stroke-linecap="round" stroke-linejoin="round"/>
 <use href="#kf" x="994" y="178.600"/>
 <!-- sliders -->
 <rect x="731" y="248" width="175.600" height="2" rx="1" fill="url(#gTemp)"/>
 <rect x="731" y="282.400" width="175.600" height="2" rx="1" fill="url(#gTint)"/>
 <rect x="731" y="316.800" width="175.600" height="2" rx="1" fill="url(#gSat)"/>
 <path d="M818.600 245.800v6.400M818.600 280.200v6.400" stroke="#dcdcdc" stroke-width="1"/>
 <use href="#thumb" x="844.500" y="249"/>
 <use href="#thumb" x="790.200" y="283.400"/>
 <use href="#thumb" x="818.700" y="317.800"/>
 <g fill="#1c1c1c"><rect x="921" y="240.200" width="43" height="17.600" rx="3"/><rect x="921" y="274.600" width="43" height="17.600" rx="3"/><rect x="921" y="309" width="43" height="17.600" rx="3"/></g>
 <use href="#stp" x="972" y="249"/><use href="#stp" x="972" y="283.400"/><use href="#stp" x="972" y="317.800"/>
 <use href="#kf" x="994" y="249"/><use href="#kf" x="994" y="283.400"/><use href="#kf" x="994" y="317.800"/>
</svg>
<span class="t" style="left:730.80px;top:41.19px;font-size:9.7px;color:#ececec;-webkit-text-stroke:0.38px;transform:scaleX(1.004);">AI media</span>
<span class="t" style="left:790.90px;top:41.19px;font-size:9.7px;color:#ececec;-webkit-text-stroke:0.38px;transform:scaleX(1.066);">Video</span>
<span class="t" style="left:837.80px;top:41.19px;font-size:9.7px;color:#ececec;-webkit-text-stroke:0.38px;transform:scaleX(1.059);">Animation</span>
<span class="t" style="left:904.60px;top:41.19px;font-size:9.7px;color:#0bb9c6;-webkit-text-stroke:0.38px;transform:scaleX(1.043);">Adjust</span>
<span class="t" style="left:954.30px;top:41.19px;font-size:9.7px;color:#ececec;-webkit-text-stroke:0.38px;transform:scaleX(1.061);">AI stylize</span>
<span class="t" style="left:745.60px;top:76.84px;font-size:9.4px;color:#e4e4e4;transform:scaleX(0.908);">Basic</span>
<span class="t" style="left:794.80px;top:76.84px;font-size:9.4px;color:#d6d6d6;transform:scaleX(0.910);">HSL</span>
<span class="t" style="left:839.80px;top:76.84px;font-size:9.4px;color:#d6d6d6;transform:scaleX(0.923);">Curves</span>
<span class="t" style="left:895.70px;top:76.84px;font-size:9.4px;color:#d6d6d6;transform:scaleX(0.965);">Color wheel</span>
<span class="t" style="left:971.80px;top:76.84px;font-size:9.4px;color:#d6d6d6;transform:scaleX(0.942);">Mask</span>
<span class="t" style="left:731.20px;top:123.61px;font-size:9.2px;color:#e0e0e0;">Protect skin tone</span>
<span class="t" style="left:731.20px;top:134.01px;font-size:9.2px;color:#8a8a8a;transform:scaleX(0.983);">Turn it on to make skin tones more natural.</span>
<span class="t" style="left:747.60px;top:174.14px;font-size:9.4px;color:#ececec;font-weight:700;transform:scaleX(0.899);">Adjust</span>
<span class="t" style="left:731.20px;top:202.51px;font-size:9.2px;color:#a8a8a8;transform:scaleX(1.014);">Color</span>
<span class="t" style="left:731.20px;top:231.01px;font-size:9.2px;color:#dcdcdc;">Temp</span>
<span class="t" style="left:731.20px;top:265.31px;font-size:9.2px;color:#dcdcdc;transform:scaleX(0.992);">Tint</span>
<span class="t" style="left:731.20px;top:299.91px;font-size:9.2px;color:#dcdcdc;transform:scaleX(0.982);">Saturation</span>
<span class="t" style="left:731.20px;top:338.61px;font-size:9.2px;color:#a8a8a8;">Lightness</span>
<span class="t" style="left:731.20px;top:366.91px;font-size:9.2px;color:#dcdcdc;transform:scaleX(0.951);">Exposure</span>
<span class="t" style="left:937.80px;top:244.58px;font-size:9.0px;color:#dcdcdc;transform:scaleX(0.900);">15</span>
<span class="t" style="left:936.00px;top:278.98px;font-size:9.0px;color:#dcdcdc;transform:scaleX(0.884);">-17</span>
<span class="t" style="left:939.80px;top:313.38px;font-size:9.0px;color:#dcdcdc;transform:scaleX(0.960);">0</span>
<!-- footer -->
<div class="a" style="left:721.800px;top:373.800px;width:294.800px;height:29.200px;background:#303030;border-radius:0 0 5px 5px"></div>
<div class="a" style="left:873.400px;top:379.400px;width:69.500px;height:17.500px;border-radius:4px;background:#00c1cd"></div>
<div class="a" style="left:950px;top:379.400px;width:57px;height:17.500px;border-radius:4px;background:#484848"></div>
<span class="t" style="left:878.40px;top:382.74px;font-size:9.4px;color:#fff;-webkit-text-stroke:0.3px;transform:scaleX(0.950);">Save as preset</span>
<span class="t" style="left:955.40px;top:382.74px;font-size:9.4px;color:#f0f0f0;-webkit-text-stroke:0.3px;transform:scaleX(1.007);">Apply to all</span>
<!-- ===== TIMELINE ===== -->
<div class="a panel" style="left:7px;top:406.700px;width:1009.600px;height:316.300px;border-radius:4px 3px 1.500px 1.500px">
 <div class="a" style="left:0;top:0;right:0;height:27.300px;background:#282828;border-bottom:1px solid #1b1b1b"></div>
 <div class="a" style="left:0;top:147.600px;width:1005px;height:60.400px;background:#2f2f2f"></div>
 <div class="a" style="left:98.600px;top:49px;width:1px;bottom:0;background:#1c1c1c"></div>
 <div class="a" style="left:101px;top:309px;width:902px;height:5px;border-radius:3px;background:#3f3f3f"></div>
 <div class="a" style="left:103px;top:163px;width:29.500px;height:30px;border-radius:4px;background:#3b3b3b;border:1px dashed #4c4c4c"></div>
</div>
<svg class="a" style="left:0;top:400px" width="1024" height="330" viewBox="0 400 1024 330">
<path d="M166.8 437.200v3.800M187.5 437.200v3.800M208.2 437.200v3.800M229.0 437.200v3.800M249.8 437.200v3.800M270.5 437.200v3.800M291.2 437.200v3.800M312.0 437.200v3.800M332.8 437.200v3.800M374.2 437.200v3.800M395.0 437.200v3.800M415.8 437.200v3.800M436.5 437.200v3.800M457.2 437.200v3.800M478.0 437.200v3.800M498.8 437.200v3.800M519.5 437.200v3.800M540.2 437.200v3.800M581.8 437.200v3.800M602.5 437.200v3.800M623.2 437.200v3.800M644.0 437.200v3.800M664.8 437.200v3.800M685.5 437.200v3.800M706.2 437.200v3.800M727.0 437.200v3.800M747.8 437.200v3.800M789.2 437.200v3.800M810.0 437.200v3.800M830.8 437.200v3.800M851.5 437.200v3.800M872.2 437.200v3.800M893.0 437.200v3.800M913.8 437.200v3.800M934.5 437.200v3.800M955.2 437.200v3.800M996.8 437.200v3.800" stroke="#484848" stroke-width="1"/>
<path d="M353.5 436.400v7.400M561.0 436.400v7.400M768.5 436.400v7.400M976.0 436.400v7.400" stroke="#808080" stroke-width=".9"/>
<path d="M148 434.200H458" stroke="#4c3e10" stroke-width="1"/>
<g class="ic" stroke="#dadada">
 <path d="M15.900 415l2 9.600 2.100-2.800 2.100 3 1.300-.9-2.100-3 3.100-.8z" stroke-width="1.100"/>
 <path d="M35.800 420l2.300 2.300 2.300-2.300" stroke-width="1.300"/>
 <path d="M66.200 415l-2.600 2.500 2.600 2.500M63.800 417.500h6.200a3.600 3.600 0 0 1 0 7.200h-5.600" stroke-width="1.300"/>
 <path d="M99.300 415l2.600 2.500-2.600 2.500M101.700 417.500h-6.200a3.600 3.600 0 0 0 0 7.200h5.600" stroke="#4e4e4e" stroke-width="1.300"/>
 <path d="M121.800 415.400h2.600v9.600h-2.600M130.600 415.400H128v9.600h2.600" stroke-width="1.700"/>
 <path d="M159.600 415.400H157v9.600h2.600" stroke-width="1.700"/><path d="M151 415.400h2.400v9.600H151" stroke-width="1.300" stroke-dasharray="1.600 1.600" stroke="#6a6a6a"/>
 <path d="M179.600 415.400h2.600v9.600h-2.600" stroke-width="1.700"/><path d="M188.200 415.400h-2.400v9.600h2.400" stroke-width="1.300" stroke-dasharray="1.600 1.600" stroke="#6a6a6a"/>
 <path d="M207.200 417h10.600M210.700 416.800v-1.600h3.600v1.600M209.200 417l.7 7.600q.1.900 1 .9h3.200q.9 0 1-.9l.7-7.600" stroke-width="1.250"/>
 <path d="M237 415.400h8v6.200l-4 3.600-4-3.600z" stroke-width="1.300"/>
 <path d="M264 416.600h10.600v6M276 424.800h-10.400v-6M265.800 414.600l-2 2 2 2M274.200 422.800l2 2-2 2" stroke-width="1.300"/><path d="M268.600 422.200l3-3" stroke-width=".9" stroke="#8a8a8a"/>
 <path d="M297.600 415.200v9.800h-4.200zM300.400 415.200v9.800h4.200z" stroke-width="1.200"/>
 <path d="M324.200 418.200a4.800 4.800 0 0 1 8-1.400M332.800 421.800a4.800 4.800 0 0 1-8 1.400M332.600 414.600v2.600h-2.600M324.400 425.400v-2.600h2.600" stroke-width="1.300"/>
 <path d="M393.300 425l5.200-5.400" stroke-width="2.900" stroke="#e2e2e2"/>
 <path d="M421.600 424.600c.4-2.500 1.700-3.500 3.900-3.500s3.500 1 3.900 3.500z" fill="#e0e0e0" stroke-width=".8"/><path d="M420.400 426.200h10.200" stroke-width="1.200"/>
 <circle cx="425.500" cy="418.400" r="2.100" fill="#e0e0e0" stroke-width=".8"/>
 <rect x="670.600" y="413.600" width="3.800" height="7.600" rx="1.900" stroke-width="1.200"/><path d="M668.400 419.600a4.100 4.100 0 0 0 8.200 0M672.500 423.800v2.200" stroke-width="1.200"/>
 <path d="M809.400 413.800v12.600M803.600 416.800h3.400M803.600 416.800v6.600h3.400M812 416.800h3.600v3" stroke-width="1.200"/>
 <path d="M822.800 420l2.300 2.300 2.300-2.300" stroke-width="1.300"/>
 <path d="M853.400 416h13.400v6h-2.400M853.400 416v6h3.200M856.200 416v2.200M859.200 416v2.800M862.200 416v2.200M865 416v2.200" stroke-width="1.150"/>
 <circle cx="859.800" cy="422.600" r="2" stroke-width="1.150"/><path d="M861.300 424.100l1.400 1.400" stroke-width="1.150"/>
 <circle cx="888.600" cy="419.800" r="4.700" stroke-width="1.250"/><path d="M886.400 419.800h4.400M892 423.400l1.900 1.900" stroke-width="1.250"/>
 <circle cx="1003.600" cy="419.800" r="4.700" stroke-width="1.250"/><path d="M1001.900 419.800h3.400M1003.600 418.100v3.400M1007 423.400l1.900 1.900" stroke-width="1.250"/>
</g>
<path d="M812.400 420.400l.9 6 1.400-1.700 2 2.300 1-.9-2-2.300 2-.7z" fill="#e6e6e6"/>
<path d="M391.200 413.400l.7 2 2 .7-2 .7-.7 2-.7-2-2-.7 2-.7zM400.200 421.800l.6 1.600 1.600.6-1.600.6-.6 1.600-.6-1.600-1.600-.6 1.600-.6zM400.600 412.800l.4 1.200 1.200.4-1.200.4-.4 1.200-.4-1.200-1.200-.4 1.200-.4z" fill="#e2e2e2"/>
<path d="M430.800 412.800l.7 1.900 1.900.7-1.900.7-.7 1.900-.7-1.900-1.900-.7 1.900-.7zM420.600 414.200l.5 1.300 1.300.5-1.300.5-.5 1.300-.5-1.300-1.300-.5 1.300-.5z" fill="#e2e2e2"/>
<rect x="361.400" y="415.200" width="11.400" height="9.400" rx="1.800" fill="#dcdcdc"/>
<path d="M52 413v14M347 413v14M692.500 408.500v12M840 408.500v12" stroke="#3a3a3a" stroke-width="1"/>
<g fill="#1a1a1a"><rect x="702" y="411" width="19" height="18.400" rx="3"/><rect x="731" y="411" width="19" height="18.400" rx="3"/><path d="M763 411h16.500v18.400H763a3 3 0 0 1-3-3v-12.400a3 3 0 0 1 3-3z"/></g><path d="M779.500 411H787a3 3 0 0 1 3 3v12.400a3 3 0 0 1-3 3h-7.500z" fill="#101010"/>
<g fill="#00c1cd"><rect x="705" y="417.600" width="4.400" height="5.200" rx="1.200"/><rect x="713.800" y="417.600" width="4.400" height="5.200" rx="1.200"/><rect x="733.800" y="417.200" width="13.600" height="5.900" rx="1.500"/><rect x="763" y="417.200" width="5.800" height="6" rx="1.400"/><rect x="770.700" y="417.200" width="5.800" height="6" rx="1.400"/></g>
<path d="M709.400 420.200h3M711.400 418.800l1.400 1.400-1.400 1.400" stroke="#00c1cd" stroke-width="1.100" fill="none"/><path d="M713.800 420.200h2.600" stroke="#1a1a1a" stroke-width="1.100"/>
<path d="M740.600 416.400v7.600" stroke="#141414" stroke-width="1.200"/><path d="M740.500 412.800v1.800M737.400 413.400l.8 1.500M743.600 413.400l-.8 1.500M740.500 425.800v1.800M737.400 427l.8-1.500M743.600 427l-.8-1.500" stroke="#00c1cd" stroke-width="1" stroke-linecap="round"/>
<path d="M766.200 420.200h7" stroke="#1a1a1a" stroke-width="1.400" stroke-linecap="round"/><path d="M768.800 420.200h1.900" stroke="#00c1cd" stroke-width="1.300"/>
<path d="M782.600 419.400l2.200 2.200 2.200-2.200" stroke="#f0f0f0" stroke-width="1.400" fill="none" stroke-linecap="round" stroke-linejoin="round"/>
<path d="M908 420h77" stroke="#060606" stroke-width="1.900" stroke-linecap="round"/><path d="M908 420h16" stroke="#f0f0f0" stroke-width="1.700" stroke-linecap="round"/><rect x="922" y="415" width="6" height="9.800" rx="2.600" fill="#fff"/>
<g class="ic" stroke="#c4c4c4" stroke-width="1.100">
 <rect x="13.600" y="581.800" width="9.200" height="7.400" rx=".8" stroke="#7c7c7c" stroke-width=".9"/>
 <rect x="34.600" y="585" width="5.600" height="3.800" rx=".9" stroke-width="1.300"/><path d="M35.900 584.800v-1.100a1.500 1.500 0 0 1 3 0v1.100"/>
 <path d="M52.800 585.600q4-3.800 8 0-4 3.800-8 0z" stroke-width="1.100"/>
 <path d="M72.400 584.200h1.400l2.100-1.800v6.400l-2.100-1.800h-1.400zM77.600 583.800v3.600M79.200 582.800q1.300 2.800 0 5.600" stroke-width="1"/>
</g>
<path d="M17 584v3l2.500-1.500z" fill="#7c7c7c"/><circle cx="56.800" cy="585.600" r="1.300" fill="#c4c4c4"/>
<circle cx="92.300" cy="585.300" r=".85" fill="#b4b4b4"/><circle cx="95.100" cy="585.300" r=".85" fill="#b4b4b4"/><circle cx="97.900" cy="585.300" r=".85" fill="#b4b4b4"/>
<path d="M122 580.400l4-4.200 1.700 1.700-4 4.200-2.100.4zM121 583.800h7" class="ic" stroke="#d0d0d0" stroke-width="1.100"/>
<clipPath id="cc"><rect x="145.200" y="556.600" width="312.900" height="56.600" rx="2.500"/></clipPath>
<g clip-path="url(#cc)"><rect x="144" y="556" width="316" height="58" fill="#064a50"/><rect x="144" y="570.600" width="316" height="30.200" fill="#ffffff"/><path d="M144 607.600h316" stroke="#1d6166" stroke-width="1"/>
<rect x="162.400" y="558" width="35.200" height="11" rx="2" fill="#1b5a60"/><rect x="200.400" y="558" width="51.200" height="11" rx="2" fill="#1b5a60"/>
<g transform="translate(156.69 574.8) scale(0.0295)"><use href="#flw" opacity=".85"/><text font-family="'Liberation Serif',serif" font-weight="700" font-size="80" letter-spacing="3" fill="#2a2a2a" stroke="#2a2a2a" stroke-width="4"><textPath href="#arc" startOffset="50%" text-anchor="middle">Bloom &amp; Grace</textPath></text></g>
<g transform="translate(196.59 574.8) scale(0.0295)"><use href="#flw" opacity=".85"/><text font-family="'Liberation Serif',serif" font-weight="700" font-size="80" letter-spacing="3" fill="#2a2a2a" stroke="#2a2a2a" stroke-width="4"><textPath href="#arc" startOffset="50%" text-anchor="middle">Bloom &amp; Grace</textPath></text></g>
<g transform="translate(236.48 574.8) scale(0.0295)"><use href="#flw" opacity=".85"/><text font-family="'Liberation Serif',serif" font-weight="700" font-size="80" letter-spacing="3" fill="#2a2a2a" stroke="#2a2a2a" stroke-width="4"><textPath href="#arc" startOffset="50%" text-anchor="middle">Bloom &amp; Grace</textPath></text></g>
<g transform="translate(276.38 574.8) scale(0.0295)"><use href="#flw" opacity=".85"/><text font-family="'Liberation Serif',serif" font-weight="700" font-size="80" letter-spacing="3" fill="#2a2a2a" stroke="#2a2a2a" stroke-width="4"><textPath href="#arc" startOffset="50%" text-anchor="middle">Bloom &amp; Grace</textPath></text></g>
<g transform="translate(316.28 574.8) scale(0.0295)"><use href="#flw" opacity=".85"/><text font-family="'Liberation Serif',serif" font-weight="700" font-size="80" letter-spacing="3" fill="#2a2a2a" stroke="#2a2a2a" stroke-width="4"><textPath href="#arc" startOffset="50%" text-anchor="middle">Bloom &amp; Grace</textPath></text></g>
<g transform="translate(356.19 574.8) scale(0.0295)"><use href="#flw" opacity=".85"/><text font-family="'Liberation Serif',serif" font-weight="700" font-size="80" letter-spacing="3" fill="#2a2a2a" stroke="#2a2a2a" stroke-width="4"><textPath href="#arc" startOffset="50%" text-anchor="middle">Bloom &amp; Grace</textPath></text></g>
<g transform="translate(396.08 574.8) scale(0.0295)"><use href="#flw" opacity=".85"/><text font-family="'Liberation Serif',serif" font-weight="700" font-size="80" letter-spacing="3" fill="#2a2a2a" stroke="#2a2a2a" stroke-width="4"><textPath href="#arc" startOffset="50%" text-anchor="middle">Bloom &amp; Grace</textPath></text></g>
<g transform="translate(435.98 574.8) scale(0.0295)"><use href="#flw" opacity=".85"/><text font-family="'Liberation Serif',serif" font-weight="700" font-size="80" letter-spacing="3" fill="#2a2a2a" stroke="#2a2a2a" stroke-width="4"><textPath href="#arc" startOffset="50%" text-anchor="middle">Bloom &amp; Grace</textPath></text></g>
</g>
<rect x="144.900" y="556.300" width="313.500" height="57.200" rx="3" fill="none" stroke="#f2f2f2" stroke-width="1.300"/>
<path d="M155 558.200l1.300 3.500 3.500 1.300-3.500 1.300-1.300 3.500-1.300-3.500-3.500-1.300 3.500-1.300z" fill="none" stroke="#f4f4f4" stroke-width="1.100" stroke-linejoin="round"/>
<path d="M146 444v268" stroke="#e4e4e4" stroke-width="1.100"/>
<path d="M143.200 435.800a1.400 1.400 0 0 1 1.400-1.400h3.600a1.400 1.400 0 0 1 1.400 1.400v5.400a3.200 3.200 0 0 1-6.400 0z" fill="#262626" stroke="#f4f4f4" stroke-width="1.400" stroke-linejoin="round"/>
</svg>
<span class="t" style="left:362.600px;top:417px;font-size:7px;font-weight:700;color:#1c1c1c;letter-spacing:-.2px">HD</span>
<span class="t" style="left:150.00px;top:437.66px;font-size:8.2px;color:#5c5c5c;transform:scaleX(1.051);">00:00</span>
<span class="t" style="left:357.50px;top:437.66px;font-size:8.2px;color:#5c5c5c;transform:scaleX(1.051);">00:02</span>
<span class="t" style="left:565.00px;top:437.66px;font-size:8.2px;color:#5c5c5c;transform:scaleX(1.051);">00:04</span>
<span class="t" style="left:772.50px;top:437.66px;font-size:8.2px;color:#5c5c5c;transform:scaleX(1.051);">00:06</span>
<span class="t" style="left:980.00px;top:437.66px;font-size:8.2px;color:#5c5c5c;transform:scaleX(1.051);">00:08</span>
<span class="t" style="left:113.80px;top:587.48px;font-size:9.0px;color:#d0d0d0;transform:scaleX(0.908);">Cover</span>
<span class="t" style="left:163.80px;top:559.12px;font-size:8.6px;color:#e8e8e8;transform:scaleX(0.937);">AI media</span>
<span class="t" style="left:202.60px;top:559.12px;font-size:8.6px;color:#e8e8e8;transform:scaleX(1.030);">00:00:03:00</span>
<!-- ===== RED HIGHLIGHT BOXES ===== -->
<svg class="a" style="left:0;top:0;pointer-events:none" width="1024" height="730" viewBox="0 0 1024 730"><g fill="none" stroke="#fa4c48">
<rect x="87.90" y="27.30" width="116.15" height="38.80" rx="4.50" stroke-width="3.8"/>
<rect x="12.70" y="94.60" width="272.80" height="308.70" rx="4.60" stroke-width="3.6"/>
<rect x="903.30" y="33.55" width="39.90" height="26.25" rx="4.60" stroke-width="3.6"/>
<rect x="717.65" y="68.75" width="296.10" height="332.30" rx="4.55" stroke-width="3.7"/>
</g></svg>
</body></html>
